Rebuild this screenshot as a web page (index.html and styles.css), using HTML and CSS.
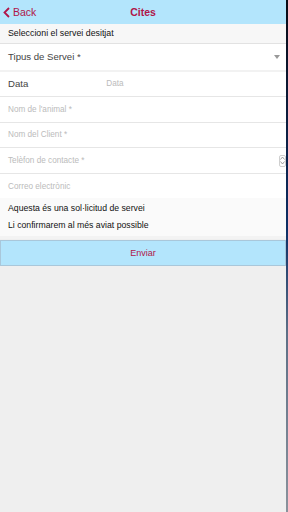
FILE: index.html
```html
<!DOCTYPE html>
<html lang="ca">
<head>
  <meta charset="UTF-8">
  <meta name="viewport" content="width=device-width, initial-scale=1.0">
  <title>Cites</title>
  <link rel="stylesheet" href="styles.css">
</head>
<body>
  <div class="app">
    <header class="nav-bar">
      <a class="back" href="#">
        <svg width="7" height="11" viewBox="0 0 7 11"><path d="M6 1 L1.5 5.5 L6 10" fill="none" stroke="currentColor" stroke-width="1.8"/></svg>
        <span>Back</span>
      </a>
      <h1 class="title">Cites</h1>
      <span class="nav-spacer"></span>
    </header>

    <div class="section-label">Seleccioni el servei desitjat</div>

    <div class="field select">
      <span class="field-text">Tipus de Servei *</span>
      <span class="caret"></span>
    </div>

    <div class="field date">
      <span class="field-text">Data</span>
      <span class="placeholder date-ph">Data</span>
    </div>

    <div class="field"><span class="placeholder">Nom de l'animal *</span></div>
    <div class="field"><span class="placeholder">Nom del Client *</span></div>
    <div class="field number">
      <span class="placeholder">Telèfon de contacte *</span>
      <span class="spinner">
        <svg width="5" height="9" viewBox="0 0 5 9"><path d="M0.5 3.5 L2.5 1 L4.5 3.5 M0.5 5.5 L2.5 8 L4.5 5.5" fill="none" stroke="#888" stroke-width="0.8"/></svg>
      </span>
    </div>
    <div class="field last"><span class="placeholder">Correo electrònic</span></div>

    <div class="notice">
      <p>Aquesta és una sol·licitud de servei</p>
      <p>Li confirmarem al més aviat possible</p>
    </div>

    <button class="send">Enviar</button>
  </div>
  <div class="edge"></div>
</body>
</html>
```

FILE: styles.css
```css
body {
  margin: 0;
  height: 100vh;
  display: flex;
  font-family: "Liberation Sans", Arial, sans-serif;
  background-color: #efefef;
  overflow: hidden;
}

.app {
  flex: 1;
  display: flex;
  flex-direction: column;
}

.edge {
  width: 2px;
  background: linear-gradient(#0a0a14, #0d2f66 45%, #5d6f86 65%, #8a929c);
}

.nav-bar {
  height: 24px;
  background-color: #b3e5fc;
  display: flex;
  align-items: center;
  color: #b01649;
}

.back {
  width: 70px;
  display: flex;
  align-items: center;
  gap: 3px;
  padding-left: 3px;
  color: #b01649;
  text-decoration: none;
  font-size: 10.5px;
}

.title {
  flex: 1;
  margin: 0;
  text-align: center;
  font-size: 10.5px;
  font-weight: bold;
}

.nav-spacer {
  width: 73px;
}

.section-label {
  height: 19px;
  line-height: 19px;
  padding-left: 8px;
  font-size: 8.8px;
  color: #111;
  background-color: #f7f7f7;
  border-bottom: 1px solid #e2e2e2;
}

.field {
  height: 24.6px;
  display: flex;
  align-items: center;
  padding: 0 8px;
  background-color: #fff;
  border-bottom: 1px solid #e6e6e6;
}

.field-text {
  font-size: 9.6px;
  color: #444;
}

.placeholder {
  font-size: 8.2px;
  color: #bbb;
}

.select {
  height: 25.5px;
  justify-content: space-between;
  padding-right: 6px;
  border-bottom: 2px solid #f2f2f2;
}

.caret {
  width: 0;
  height: 0;
  border-left: 3.5px solid transparent;
  border-right: 3.5px solid transparent;
  border-top: 4px solid #999;
}

.date-ph {
  margin-left: 78px;
}

.number {
  justify-content: space-between;
  padding-right: 0;
}

.spinner {
  display: flex;
  align-items: center;
  justify-content: center;
  width: 5px;
  height: 10px;
  border: 1px solid #cfcfcf;
  border-radius: 2px;
}

.last {
  border-bottom: none;
}

.notice {
  background-color: #fafafa;
  padding-bottom: 2px;
  border-bottom: 3px solid #f3f3f3;
}

.notice p {
  margin: 0;
  padding-left: 8px;
  font-size: 8.7px;
  color: #111;
  height: 17px;
  line-height: 17px;
}

.notice p:first-child {
  height: 19px;
  line-height: 21px;
}

.send {
  margin-top: 1px;
  height: 26px;
  border: 1px solid #a9c7da;
  background-color: #b3e5fc;
  color: #b01649;
  font-family: "Liberation Sans", Arial, sans-serif;
  font-size: 9px;
  padding: 0;
}
```
